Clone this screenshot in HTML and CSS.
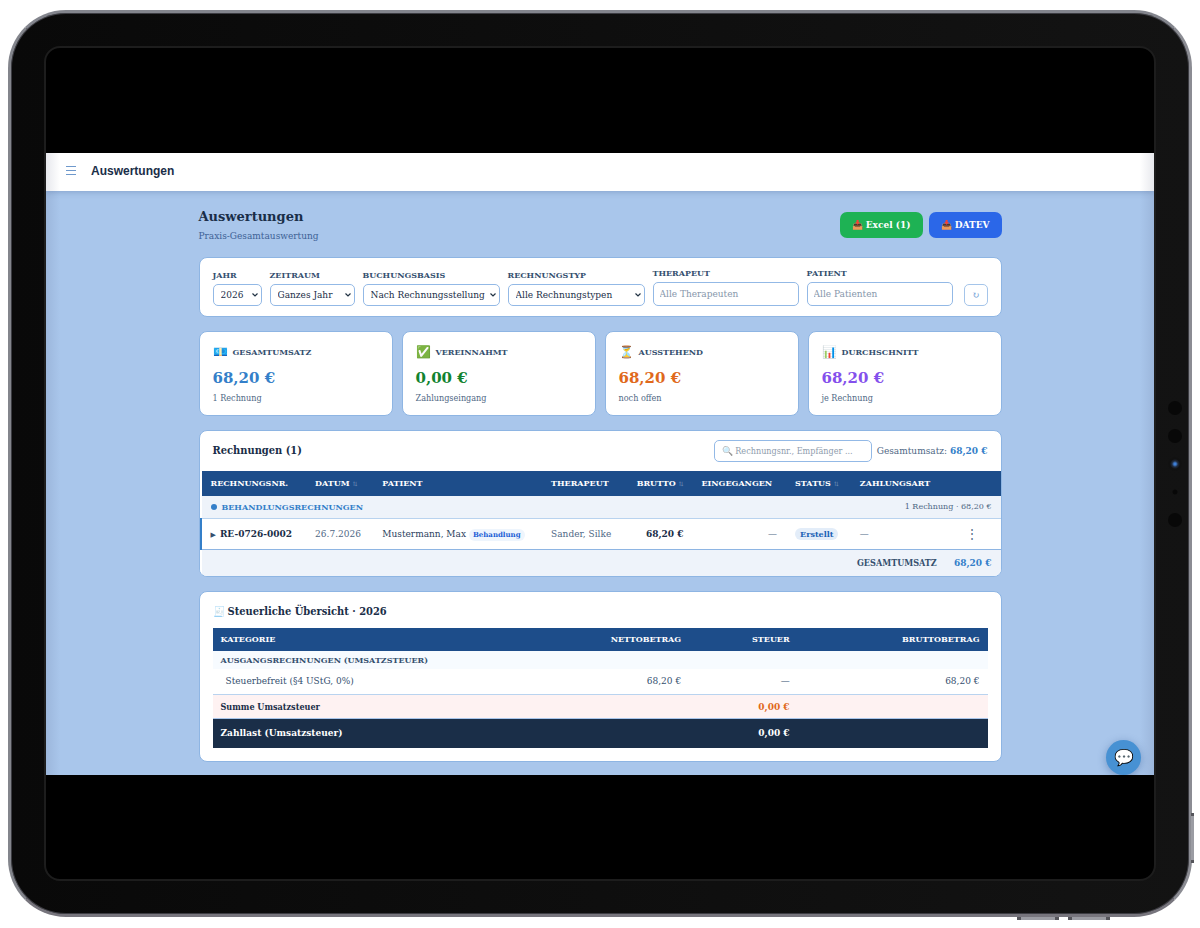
FILE: index.html
```html
<!DOCTYPE html>
<html lang="de">
<head>
<meta charset="utf-8">
<meta name="viewport" content="width=device-width, initial-scale=1">
<title>Auswertungen</title>
<link rel="stylesheet" href="styles.css">
</head>
<body>
<div class="device">
  <span class="key key-side"></span>
  <span class="key key-bottom-a"></span>
  <span class="key key-bottom-b"></span>
  <div class="sensors"><i class="lens"></i><i class="lens"></i><i class="lens camera"></i><i class="lens mic"></i><i class="lens"></i></div>
  <div class="screen">
    <div class="app">
      <header class="topbar">
        <button class="menu" type="button" aria-label="Menü">
          <svg viewBox="0 0 10 10" width="10" height="10"><path d="M0 .5h10M0 4.5h10M0 8.5h10" stroke="currentColor" fill="none"/></svg>
        </button>
        <span class="topbar-title">Auswertungen</span>
      </header>
      <main class="content">
        <div class="page-head">
          <div>
            <h1>Auswertungen</h1>
            <p class="subtitle">Praxis-Gesamtauswertung</p>
          </div>
          <div class="actions">
            <button class="btn btn-excel" type="button">📥 Excel (1)</button>
            <button class="btn btn-datev" type="button">📥 DATEV</button>
          </div>
        </div>

        <form class="card filters">
          <div class="field f-year"><label for="jahr">JAHR</label><select id="jahr"><option>2026</option></select></div>
          <div class="field f-period"><label for="zeitraum">ZEITRAUM</label><select id="zeitraum"><option>Ganzes Jahr</option></select></div>
          <div class="field f-basis"><label for="basis">BUCHUNGSBASIS</label><select id="basis"><option>Nach Rechnungsstellung</option></select></div>
          <div class="field f-basis"><label for="typ">RECHNUNGSTYP</label><select id="typ"><option>Alle Rechnungstypen</option></select></div>
          <div class="field f-text"><label for="therapeut">THERAPEUT</label><input id="therapeut" type="text" placeholder="Alle Therapeuten"></div>
          <div class="field f-text"><label for="patient">PATIENT</label><input id="patient" type="text" placeholder="Alle Patienten"></div>
          <button class="reset" type="button" aria-label="Zurücksetzen">↻</button>
        </form>

        <section class="stats">
          <article class="card stat blue"><h2><span class="emoji">💶</span>GESAMTUMSATZ</h2><strong>68,20 €</strong><p>1 Rechnung</p></article>
          <article class="card stat green"><h2><span class="emoji">✅</span>VEREINNAHMT</h2><strong>0,00 €</strong><p>Zahlungseingang</p></article>
          <article class="card stat orange"><h2><span class="emoji">⏳</span>AUSSTEHEND</h2><strong>68,20 €</strong><p>noch offen</p></article>
          <article class="card stat violet"><h2><span class="emoji">📊</span>DURCHSCHNITT</h2><strong>68,20 €</strong><p>je Rechnung</p></article>
        </section>

        <section class="card invoices">
          <div class="invoices-head">
            <h2>Rechnungen (1)</h2>
            <div class="invoices-tools">
              <input class="search" type="search" aria-label="Rechnungen suchen" placeholder="🔍 Rechnungsnr., Empfänger ...">
              <span>Gesamtumsatz: <b class="sum">68,20 €</b></span>
            </div>
          </div>
          <table class="invoice-table">
            <colgroup><col class="c-nr"><col class="c-date"><col class="c-patient"><col class="c-therapist"><col class="c-gross"><col class="c-received"><col class="c-status"><col class="c-pay"><col></colgroup>
            <thead>
              <tr><th>RECHNUNGSNR.</th><th>DATUM <small>⇅</small></th><th>PATIENT</th><th>THERAPEUT</th><th class="num">BRUTTO <small>⇅</small></th><th>EINGEGANGEN</th><th>STATUS <small>⇅</small></th><th>ZAHLUNGSART</th><th></th></tr>
            </thead>
            <tbody>
              <tr class="group"><td colspan="5"><span class="dot"></span>BEHANDLUNGSRECHNUNGEN</td><td class="num group-sum" colspan="4">1 Rechnung · 68,20 €</td></tr>
              <tr class="row"><td class="nr"><span class="caret">▶</span>RE-0726-0002</td><td>26.7.2026</td><td class="dark">Mustermann, Max <span class="tag">Behandlung</span></td><td>Sander, Silke</td><td class="num nr">68,20 €</td><td class="num">—</td><td><span class="tag status">Erstellt</span></td><td>—</td><td class="more-cell"><button class="more" type="button" aria-label="Aktionen">⋮</button></td></tr>
            </tbody>
            <tfoot>
              <tr><td class="num total" colspan="9"><span class="narrow">GESAMTUMSATZ</span> <span class="sum">68,20 €</span></td></tr>
            </tfoot>
          </table>
        </section>

        <section class="card tax">
          <h2><span class="emoji receipt">🧾</span>Steuerliche Übersicht · 2026</h2>
          <table class="tax-table">
            <colgroup><col><col class="t-net"><col class="t-tax"><col class="t-gross"></colgroup>
            <thead><tr><th>KATEGORIE</th><th class="num">NETTOBETRAG</th><th class="num">STEUER</th><th class="num">BRUTTOBETRAG</th></tr></thead>
            <tbody>
              <tr class="tax-group"><td colspan="4">AUSGANGSRECHNUNGEN (UMSATZSTEUER)</td></tr>
              <tr class="tax-row"><td>Steuerbefreit (§4 UStG, 0%)</td><td class="num">68,20 €</td><td class="num">—</td><td class="num">68,20 €</td></tr>
              <tr class="tax-sum"><td class="narrow">Summe Umsatzsteuer</td><td></td><td class="num">0,00 €</td><td></td></tr>
            </tbody>
            <tfoot><tr><td>Zahllast (Umsatzsteuer)</td><td></td><td class="num">0,00 €</td><td></td></tr></tfoot>
          </table>
        </section>
      </main>
      <button class="chat" type="button" aria-label="Chat öffnen">💬</button>
    </div>
  </div>
</div>
</body>
</html>
```
FILE: styles.css
```css
* { box-sizing: border-box; }

body {
  margin: 0;
  padding: 10px 8px 11px;
  min-height: 100vh;
  display: flex;
  background: #fff;
  color: #1a2e48;
  font: 9px/12px "DejaVu Serif", serif;
}

h1, h2, p { margin: 0; }
button, input, select { font: inherit; color: inherit; }
input::placeholder { color: #8797ab; opacity: 1; }

/* Tablet frame */
.device {
  position: relative;
  flex: 1;
  display: flex;
  padding: 33px;
  border: 3px solid #85868e;
  border-color: #83858d #8b8c93 #77757d #83858c;
  border-radius: 58px;
  background: linear-gradient(90deg, #090909, #131313);
  box-shadow: inset 0 0 0 1px #3c3c42;
}
.key { position: absolute; background: #9b9ca3; border: 0 solid #55555b; }
.key-side { right: -5px; top: 800px; width: 3px; height: 50px; border-width: 3px 0; }
.key-bottom-a, .key-bottom-b { bottom: -6px; width: 42px; height: 3px; border-width: 0 4px; }
.key-bottom-a { right: 130px; }
.key-bottom-b { right: 79px; }
.sensors {
  position: absolute;
  top: 0;
  bottom: 0;
  right: 7px;
  display: flex;
  flex-direction: column;
  justify-content: center;
  gap: 14px;
}
.lens { width: 14px; height: 14px; border-radius: 50%; background: #080808; }
.camera { background: radial-gradient(circle, #3f80d8 1px, #202c40 3px, #111 5px); }
.mic { background: radial-gradient(circle, #080808 2px, transparent 3px); }

.screen {
  flex: 1;
  display: flex;
  flex-direction: column;
  justify-content: center;
  border: 2px solid #1d1d1d;
  border-radius: 16px;
  background: #000;
  overflow: hidden;
}

/* Application */
.app {
  position: relative;
  overflow: hidden;
  background: #a9c6eb;
}
.app::after {
  content: "";
  position: absolute;
  inset: 0;
  pointer-events: none;
  background: linear-gradient(90deg, rgba(60, 70, 110, .12), transparent 14px calc(100% - 14px), rgba(60, 70, 110, .12));
}
.topbar {
  position: relative;
  display: flex;
  align-items: center;
  gap: 15px;
  height: 38px;
  padding: 0 20px 1px;
  background: #fff;
  box-shadow: 0 1px 6px rgba(50, 80, 130, .3);
}
.menu { display: flex; padding: 0; border: 0; background: none; color: #6f99cc; }
.topbar-title { font: bold 12px/16px "Liberation Sans", sans-serif; }

.content {
  display: flex;
  flex-direction: column;
  gap: 14px;
  max-width: 835px;
  margin: 0 auto;
  padding: 18px 16px 13px;
}
.page-head { display: flex; justify-content: space-between; align-items: center; padding-bottom: 1px; }
.page-head h1 { font-size: 13px; line-height: 16px; }
.subtitle { margin-top: 5px; color: #3e6296; }
.actions { display: flex; gap: 6px; }
.btn {
  height: 26px;
  padding: 0 12px;
  border: 0;
  border-radius: 7px;
  color: #fff;
  font-weight: bold;
}
.btn-excel { background: #1eb254; }
.btn-datev { background: #2b67e8; }

.card { border: 1px solid #8eb5e3; border-radius: 8px; background: #fff; }

.filters { display: flex; align-items: flex-end; gap: 8px; padding: 9px 13px 10px; }
.field { display: flex; flex-direction: column; gap: 3px; min-width: 0; }
.field label, .stat h2 { font-size: 8px; line-height: 12px; font-weight: bold; color: #35506f; }
.field select, .field input, .search {
  width: 100%;
  height: 22px;
  padding: 0 7px;
  border: 1px solid #93b9e6;
  border-radius: 5px;
  background: #fff;
}
.field input { height: 24px; padding: 0 6px; }
.field select {
  appearance: none;
  background: url("data:image/svg+xml,%3Csvg xmlns='http://www.w3.org/2000/svg' viewBox='0 0 6 4'%3E%3Cpath d='M.5.5 3 3 5.5.5' fill='none' stroke='%23223344' stroke-width='1.2'/%3E%3C/svg%3E") no-repeat right 3px center / 6px 4px #fff;
}
.f-year { flex: 0 0 49px; }
.f-period { flex: 0 0 85px; }
.f-basis { flex: 0 0 137px; }
.f-text { flex: 1; }
.reset {
  width: 24px;
  height: 22px;
  margin-left: 3px;
  padding: 0;
  border: 1px solid #a5c5ea;
  border-radius: 5px;
  background: #fff;
  color: #6f9cd4;
}

.stats { display: grid; grid-template-columns: repeat(4, 1fr); gap: 9px; }
.stat { padding: 12px 13px 11px; }
.stat h2 { display: flex; align-items: center; gap: 5px; height: 16px; }
.emoji { font-size: 12px; }
.stat strong { display: block; margin-top: 8px; font-size: 15px; line-height: 20px; }
.stat p { margin-top: 4px; color: #4f6885; }
.stat p, .search, .narrow, .invoices h2, .tax h2 { font-family: "DejaVu Serif Condensed", "DejaVu Serif", serif; }
.blue strong, .sum { color: #347fc9; }
.green strong { color: #12832f; }
.orange strong { color: #e0691b; }
.violet strong { color: #8450ec; }

.invoices { overflow: hidden; }
.invoices-head { display: flex; justify-content: space-between; align-items: center; height: 40px; padding: 0 13px; }
.invoices h2, .tax h2 { font-size: 11px; line-height: 14px; }
.invoices-tools { display: flex; align-items: center; gap: 5px; color: #4f6885; }
.search { width: 158px; appearance: none; }
.search::placeholder { color: #51677f; opacity: .65; }

table { width: 100%; border-collapse: collapse; table-layout: fixed; }
th, td { padding: 0 9px; text-align: left; white-space: nowrap; }
th { background: #1d4d8a; color: #fff; font-size: 8px; }
th small { font-size: 6px; font-weight: normal; color: #7795bd; }
.num { text-align: right; }
.invoice-table { border-left: 2px solid #fff; }
.invoice-table thead tr { height: 25px; }
.c-nr { width: 13.2%; }
.c-date { width: 8.4%; }
.c-patient { width: 21.1%; }
.c-therapist { width: 10.2%; }
.c-gross { width: 8.6%; }
.c-received { width: 11.7%; }
.c-status { width: 8.1%; }
.c-pay { width: 11.7%; }

.group { height: 23px; background: #eef3fa; color: #347fc9; font-size: 8px; font-weight: bold; }
.group td { border-bottom: 1px solid #b9d3ef; }
.dot { display: inline-block; width: 6px; height: 6px; margin-right: 5px; border-radius: 50%; background: #347fc9; }
.group .group-sum { color: #4f6885; font-weight: normal; }
.row { height: 31px; color: #4f6885; }
.row td { border-bottom: 1px solid #8eb5e3; }
.row td:first-child { border-left: 2px solid #347fc9; }
.row .dark { color: #2c4260; }
.row .nr { color: #1a2e48; font-weight: bold; }
.caret { margin-right: 4px; font-size: 7px; font-weight: normal; color: #35506f; }
.tag { display: inline-block; padding: 0 4px; border-radius: 6px; background: #eef5fd; color: #1d5fd6; font-size: 7px; font-weight: bold; }
.status { padding: 0 5px; background: #e3edf9; color: #1a62b5; font-size: 8px; }
.more-cell { text-align: center; }
.more { padding: 0; border: 0; background: none; font-size: 12px; }
.invoice-table tfoot tr { height: 26px; background: #eef3fa; }
.total { color: #35506f; font-weight: bold; }
.total .narrow { font-size: 9px; }
.total .sum { margin-left: 14px; }

.tax { padding: 13px; }
.tax h2 { display: flex; align-items: center; gap: 3px; margin-bottom: 9px; }
.receipt { font-size: 10px; opacity: .7; }
.tax-table th, .tax-table td { padding: 0 8px; }
.tax-table thead tr { height: 23px; }
.t-net { width: 15%; }
.t-tax { width: 14%; }
.t-gross { width: 24.5%; }
.tax-group { height: 18px; background: #f7fbff; color: #35506f; font-size: 8px; font-weight: bold; }
.tax-row { height: 26px; color: #35506f; }
.tax-row td { border-bottom: 1px solid #b9d3ef; }
.tax-table .tax-row td:first-child { padding-left: 13px; }
.tax-sum { height: 24px; background: #fef2f2; font-weight: bold; }
.tax-sum td { border-bottom: 1px solid #a9c6eb; }
.tax-sum .num { color: #e0691b; }
.tax-table tfoot tr { height: 29px; background: #1a2e48; color: #fff; font-weight: bold; }

.chat {
  position: absolute;
  right: 13px;
  bottom: 0;
  width: 35px;
  height: 35px;
  padding: 0;
  border: 0;
  border-radius: 50%;
  background: #4791d3;
  box-shadow: 0 2px 8px rgba(40, 80, 140, .4);
  font-size: 16px;
  line-height: 35px;
}
```
